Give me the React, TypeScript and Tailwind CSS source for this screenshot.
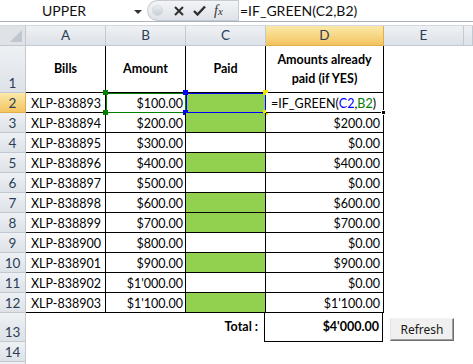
import React from "react";

type Row = { n: number; bill: string; amount: string; paid: boolean; d: string };

const rows: Row[] = [
  { n: 2, bill: "XLP-838893", amount: "$100.00", paid: true, d: "" },
  { n: 3, bill: "XLP-838894", amount: "$200.00", paid: true, d: "$200.00" },
  { n: 4, bill: "XLP-838895", amount: "$300.00", paid: false, d: "$0.00" },
  { n: 5, bill: "XLP-838896", amount: "$400.00", paid: true, d: "$400.00" },
  { n: 6, bill: "XLP-838897", amount: "$500.00", paid: false, d: "$0.00" },
  { n: 7, bill: "XLP-838898", amount: "$600.00", paid: true, d: "$600.00" },
  { n: 8, bill: "XLP-838899", amount: "$700.00", paid: true, d: "$700.00" },
  { n: 9, bill: "XLP-838900", amount: "$800.00", paid: false, d: "$0.00" },
  { n: 10, bill: "XLP-838901", amount: "$900.00", paid: true, d: "$900.00" },
  { n: 11, bill: "XLP-838902", amount: "$1'000.00", paid: false, d: "$0.00" },
  { n: 12, bill: "XLP-838903", amount: "$1'100.00", paid: true, d: "$1'100.00" },
];

const hdr = "bg-gradient-to-b from-[#eef1f4] to-[#dde2e8] border-r border-b border-[#c3c9d1] text-[#2c3e55]";
const hdrSel = "bg-gradient-to-b from-[#fbe9a8] to-[#f3c45f] border-r border-b border-[#e0ae4a] text-[#2c3e55]";

function RowHead({ n, sel, h }: { n?: number; sel?: boolean; h: string }) {
  return (
    <div className={`w-[26px] shrink-0 ${h} flex items-end justify-center pb-[1px] leading-[16px] text-[13.5px] ${sel ? hdrSel : hdr}`}>
      {n}
    </div>
  );
}

function Handles({ color }: { color: string }) {
  // small squares on the left corners of a highlighted reference range
  return (
    <>
      <span className={`absolute -left-[3px] -top-[3px] w-[5px] h-[5px] ${color}`} />
      <span className={`absolute -left-[3px] -bottom-[3px] w-[5px] h-[5px] ${color}`} />
    </>
  );
}

export default function App() {
  return (
    <div className="w-[473px] h-[364px] overflow-hidden bg-white text-[12.5px] text-black font-['Lato',sans-serif]">
      {/* Formula bar */}
      <div className="flex h-[22px] border-b border-[#a9b1bb] bg-white">
        <div className="w-[147px] shrink-0 relative flex items-center">
          <span className="w-[128px] text-center text-[14px] text-[#111]">UPPER</span>
          <span className="absolute left-[134px] top-[10px] w-0 h-0 border-l-[4px] border-r-[4px] border-t-[4px] border-l-transparent border-r-transparent border-t-[#333]" />
        </div>
        <div className="w-[91px] shrink-0 flex items-center rounded-l-full bg-gradient-to-b from-[#f2f4f6] to-[#dfe3e8] border border-[#c4cad1] border-r-0">
          <span className="ml-[4px] w-[11px] h-[11px] rounded-full bg-gradient-to-b from-[#e9ecef] to-[#c9ced4] border border-[#d6dae0]" />
          <svg className="ml-[11px]" width="10" height="10" viewBox="0 0 10 10">
            <path d="M1 1 L9 9 M9 1 L1 9" stroke="#2e2e2e" strokeWidth="2" />
          </svg>
          <svg className="ml-[9px]" width="13" height="11" viewBox="0 0 13 11">
            <path d="M1 6 L4.5 9.5 L12 1.5" stroke="#2e2e2e" strokeWidth="2.4" fill="none" />
          </svg>
          <span className="ml-[8px] font-['Liberation_Serif',serif] italic text-[14px] text-[#333] leading-none">
            f<span className="text-[11px]">x</span>
          </span>
        </div>
        <div className="flex-1 flex items-center border-l border-[#c4cad1] pl-[1px] text-[14px] text-[#111]">
          =IF_GREEN(C2,B2)
        </div>
      </div>
      <div className="h-[4px] border-b border-[#d4d8de]" />

      {/* Column headers */}
      <div className="flex h-[20px] text-[13.5px]">
        <div className="w-[26px] shrink-0 relative bg-[#dfe3e8] border-r border-b border-[#c3c9d1]">
          <svg className="absolute right-[3px] bottom-[3px]" width="12" height="12" viewBox="0 0 12 12">
            <path d="M12 0 L12 12 L0 12 Z" fill="#c0c6cd" />
          </svg>
        </div>
        <div className={`w-[80px] shrink-0 flex items-center justify-center ${hdr}`}>A</div>
        <div className={`w-[80px] shrink-0 flex items-center justify-center ${hdr}`}>B</div>
        <div className={`w-[80px] shrink-0 flex items-center justify-center ${hdr}`}>C</div>
        <div className={`w-[118px] shrink-0 flex items-center justify-center ${hdrSel}`}>D</div>
        <div className={`w-[80px] shrink-0 flex items-center justify-center ${hdr}`}>E</div>
        <div className={`flex-1 ${hdr}`} />
      </div>

      {/* Row 1 */}
      <div className="flex h-[47px]">
        <RowHead n={1} h="h-[47px]" />
        <div className="w-[80px] shrink-0 border-r border-b border-black flex items-center justify-center font-bold">Bills</div>
        <div className="w-[80px] shrink-0 border-r border-b border-black flex items-center justify-center font-bold">Amount</div>
        <div className="w-[80px] shrink-0 border-r border-b border-black flex items-center justify-center font-bold">Paid</div>
        <div className="w-[118px] shrink-0 border-r border-b border-black flex flex-col items-center justify-center font-bold leading-[19px]">
          <span>Amounts already</span>
          <span>paid (if YES)</span>
        </div>
      </div>

      {/* Data rows */}
      {rows.map((r) => (
        <div key={r.n} className="flex h-[20px]">
          <RowHead n={r.n} sel={r.n === 2} h="h-[20px]" />
          <div className="w-[80px] shrink-0 border-r border-b border-black flex items-end pl-[5px] leading-[16px]">{r.bill}</div>
          <div className={`w-[80px] shrink-0 border-r border-b border-black flex items-end justify-end pr-[2px] leading-[16px] relative ${r.n === 2 ? "outline outline-[1px] outline-[#008000] -outline-offset-1 border-b-[#008000]" : ""}`}>
            {r.amount}
            {r.n === 2 && <Handles color="bg-[#008000]" />}
          </div>
          <div className={`w-[80px] shrink-0 border-r border-b border-black relative ${r.paid ? "bg-[#92d050]" : ""} ${r.n === 2 ? "outline outline-[1px] outline-[#0000ff] -outline-offset-1" : ""}`}>
            {r.n === 2 && (
              <>
                <Handles color="bg-[#0000ff]" />
                <span className="absolute -right-[3px] -top-[3px] w-[5px] h-[5px] bg-[#f5e400]" />
                <span className="absolute -right-[3px] -bottom-[3px] w-[5px] h-[5px] bg-[#f5e400]" />
              </>
            )}
          </div>
          {r.n === 2 ? (
            <div className="w-[118px] shrink-0 border-r border-b border-black flex items-end pl-[5px] leading-[16px] relative bg-white">
              =IF_GREEN(<span className="text-[#0000ff]">C2</span>,<span className="text-[#008000]">B2</span>)
              <span className="absolute -right-[3px] -bottom-[3px] w-[5px] h-[5px] bg-black border border-white" />
            </div>
          ) : (
            <div className="w-[118px] shrink-0 border-r border-b border-black flex items-end justify-end pr-[3px] leading-[16px]">{r.d}</div>
          )}
        </div>
      ))}

      {/* Row 13 */}
      <div className="flex h-[29px]">
        <RowHead n={13} h="h-[29px]" />
        <div className="w-[160px] shrink-0" />
        <div className="w-[79px] shrink-0 flex items-center justify-end pr-[6px] font-bold border-r border-black">Total :</div>
        <div className="w-[118px] shrink-0 border-r border-b border-black flex items-center justify-end pr-[3px] font-bold">$4'000.00</div>
        <div className="w-[80px] shrink-0 pl-[7px] pt-[5px]">
          <button className="w-[64px] h-[23px] bg-[#f0f0f0] border border-t-[#f4f4f4] border-l-[#e2e2e2] border-b-[#6d6d6d] border-r-[#6d6d6d] shadow-[inset_-1px_-1px_0_#a0a0a0] text-[12px] text-[#1a1a1a] font-['Noto_Sans',sans-serif] leading-none">
            Refresh
          </button>
        </div>
      </div>

      {/* Row 14 and the top of row 15 */}
      <div className="flex h-[20px]">
        <RowHead n={14} h="h-[20px]" />
      </div>
      <div className="flex h-[20px]">
        <RowHead h="h-[20px]" />
      </div>
    </div>
  );
}
